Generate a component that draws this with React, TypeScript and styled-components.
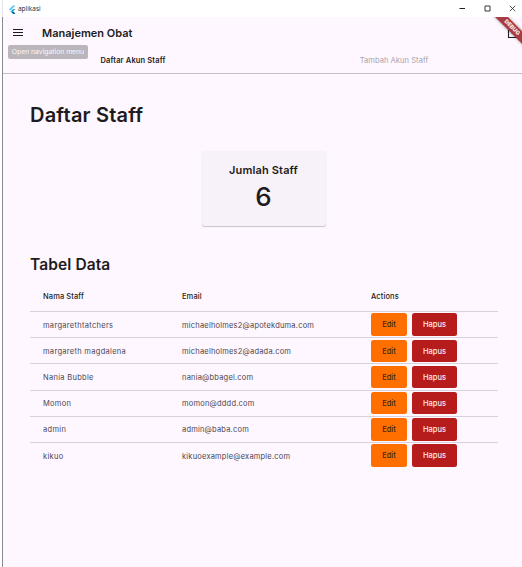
import React from "react";
import styled, { createGlobalStyle } from "styled-components";

const GlobalStyle = createGlobalStyle`
  * { box-sizing: border-box; }
  body { margin: 0; background: #fff; font-family: Inter, sans-serif; color: #1d1b20; overflow: hidden; }
`;

const Window = styled.div`
  display: flex;
  flex-direction: column;
  width: 522px;
  height: 567px;
`;

const TitleBar = styled.header`
  display: flex;
  align-items: center;
  justify-content: space-between;
  height: 17px;
  margin-left: 2px;
  padding: 0 6px 0 5px;
  border-left: 1px solid #e4e2e6;
  background: #fff;
`;

const AppName = styled.div`
  display: flex;
  align-items: center;
  gap: 2px;
  padding-top: 1px;
  font: 6.5px/10px "Open Sans", sans-serif;
  color: #222;
`;

const WindowControls = styled.div`
  display: flex;
  align-items: center;
  gap: 18px;
`;

const Client = styled.main`
  position: relative;
  flex: 1;
  margin-left: 2px;
  border-left: 1px solid #8d8a92;
  background: #fef7ff;
  overflow: hidden;
`;

const AppBar = styled.div`
  display: flex;
  align-items: center;
  justify-content: space-between;
  height: 31px;
  padding: 0 3px 0 10px;
`;

const BarLead = styled.div`
  display: flex;
  align-items: center;
  gap: 19px;
`;

const BarTitle = styled.h1`
  margin: 1px 0 0;
  font-size: 11px;
  line-height: 16px;
  font-weight: 600;
`;

const Tooltip = styled.div`
  position: absolute;
  left: 5px;
  top: 28px;
  width: 80px;
  height: 14px;
  border-radius: 2px;
  background: #bab6bb;
  color: #fbf5fc;
  font-size: 6.8px;
  line-height: 14px;
  text-align: center;
  white-space: nowrap;
`;

const Ribbon = styled.div`
  position: absolute;
  left: 479px;
  top: 6px;
  width: 60px;
  height: 9px;
  transform: rotate(45deg);
  background: #a83c40;
  box-shadow: 0 0 3px rgba(0, 0, 0, 0.45);
  color: #f7e3e6;
  font-size: 5.6px;
  line-height: 9px;
  font-weight: 900;
  text-align: center;
`;

const Tabs = styled.nav`
  display: grid;
  grid-template-columns: 260px 262px;
  height: 26px;
  border-bottom: 1px solid #c3bdc6;
`;

const Tab = styled.div<{ $active?: boolean }>`
  padding-top: 6px;
  font-size: 7.5px;
  line-height: 14px;
  text-align: center;
  letter-spacing: ${(p) => (p.$active ? "0.15px" : "0.07px")};
  font-weight: ${(p) => (p.$active ? 600 : 400)};
  color: ${(p) => (p.$active ? "#1d1b20" : "#a8a3ab")};
`;

const Content = styled.section`
  display: flex;
  flex-direction: column;
  padding: 27px 24px 0 27px;
`;

const PageTitle = styled.h2`
  margin: 0;
  font-size: 20px;
  line-height: 28px;
  font-weight: 600;
  letter-spacing: 0.2px;
`;

const StatCard = styled.div`
  align-self: center;
  width: 124px;
  height: 75px;
  margin: 22px 0 0 -1px;
  padding-top: 11px;
  border-radius: 3px;
  background: #f7f2fa;
  box-shadow: 0 1px 1px rgba(0, 0, 0, 0.22), 0 0 1px rgba(0, 0, 0, 0.06);
  text-align: center;
`;

const StatLabel = styled.div`
  font-size: 11px;
  line-height: 17px;
  font-weight: 600;
  letter-spacing: 0.15px;
`;

const StatValue = styled.div`
  font-size: 26px;
  line-height: 36px;
  font-weight: 500;
`;

const SectionTitle = styled.h3`
  margin: 29px 0 0;
  font-size: 15.5px;
  line-height: 20px;
  font-weight: 600;
  letter-spacing: 0.1px;
`;

const Table = styled.div`
  display: flex;
  flex-direction: column;
  margin-top: 6px;
`;

const Row = styled.div<{ $head?: boolean }>`
  display: grid;
  grid-template-columns: 139px 189px 1fr;
  align-items: center;
  height: ${(p) => (p.$head ? "30px" : "26.2px")};
  padding-left: 13px;
  border-top: ${(p) => (p.$head ? "0" : "1px solid #d8d1db")};
  font-size: 7.5px;
  font-weight: ${(p) => (p.$head ? 500 : 400)};
  letter-spacing: ${(p) => (p.$head ? "0.1px" : "0.2px")};
  color: ${(p) => (p.$head ? "#1d1b20" : "#49454f")};
`;

const Cell = styled.span<{ $wide?: boolean }>`
  padding-top: 1px;
  white-space: nowrap;
  letter-spacing: ${(p) => (p.$wide ? "0.3px" : "inherit")};
`;

const Actions = styled.div`
  display: flex;
  gap: 5px;
`;

const Button = styled.button<{ $danger?: boolean }>`
  width: ${(p) => (p.$danger ? "45px" : "36px")};
  height: 22.5px;
  padding: 1px 0 0;
  border: 0;
  border-radius: 2.5px;
  background: ${(p) => (p.$danger ? "#b71c1c" : "#ff6f00")};
  color: ${(p) => (p.$danger ? "#fbe9ea" : "#4a2410")};
  font: 500 7.5px/21.5px Inter, sans-serif;
`;

const staff = [
  { name: "margarethtatchers", email: "michaelholmes2@apotekduma.com" },
  { name: "margareth magdalena", email: "michaelholmes2@adada.com" },
  { name: "Nania Bubble", email: "nania@bbagel.com" },
  { name: "Momon", email: "momon@dddd.com" },
  { name: "admin", email: "admin@baba.com" },
  { name: "kikuo", email: "kikuoexample@example.com" },
];

const FlutterLogo = () => (
  <svg width="8" height="9" viewBox="0 0 8 9">
    <path d="M5 0.5H7.5L2.3 5.6L1 4.4Z" fill="#54c5f8" />
    <path d="M5 4H7.5L5 6.4L7.5 8.7H5L2.6 6.4Z" fill="#29a5dc" />
    <path d="M3.8 7.5L5 6.4L7.5 8.7H5Z" fill="#01579b" />
  </svg>
);

const MenuIcon = () => (
  <svg width="10" height="9" viewBox="0 0 10 9" stroke="#1d1b20" strokeWidth="1.15">
    <path d="M0 1.5H10M0 4.5H10M0 7.5H10" />
  </svg>
);

const LogoutIcon = () => (
  <svg width="12" height="12" viewBox="0 0 12 12" fill="none" stroke="#1d1b20" strokeWidth="1.1">
    <path d="M5 1.5H1.5V10.5H9.5V8.5M4.5 6H10.5M8.3 3.5L10.7 6L8.3 8.5" />
  </svg>
);

export default function App() {
  return (
    <Window>
      <GlobalStyle />
      <TitleBar>
        <AppName>
          <FlutterLogo />
          aplikasi
        </AppName>
        <WindowControls>
          <svg width="7" height="7" viewBox="0 0 7 7" stroke="#222"><path d="M0.5 3.5H6" /></svg>
          <svg width="7" height="7" viewBox="0 0 7 7" fill="none" stroke="#222"><path d="M1 1H6V6H1Z" strokeWidth="0.9" /></svg>
          <svg width="7" height="7" viewBox="0 0 7 7" stroke="#222"><path d="M0.8 0.8L6.2 6.2M6.2 0.8L0.8 6.2" strokeWidth="0.8" /></svg>
        </WindowControls>
      </TitleBar>
      <Client>
        <AppBar>
          <BarLead>
            <MenuIcon />
            <BarTitle>Manajemen Obat</BarTitle>
          </BarLead>
          <LogoutIcon />
        </AppBar>
        <Tabs>
          <Tab $active>Daftar Akun Staff</Tab>
          <Tab>Tambah Akun Staff</Tab>
        </Tabs>
        <Content>
          <PageTitle>Daftar Staff</PageTitle>
          <StatCard>
            <StatLabel>Jumlah Staff</StatLabel>
            <StatValue>6</StatValue>
          </StatCard>
          <SectionTitle>Tabel Data</SectionTitle>
          <Table>
            <Row $head>
              <Cell>Nama Staff</Cell>
              <Cell>Email</Cell>
              <Cell>Actions</Cell>
            </Row>
            {staff.map((s) => (
              <Row key={s.name}>
                <Cell $wide>{s.name}</Cell>
                <Cell>{s.email}</Cell>
                <Actions>
                  <Button>Edit</Button>
                  <Button $danger>Hapus</Button>
                </Actions>
              </Row>
            ))}
          </Table>
        </Content>
        <Tooltip>Open navigation menu</Tooltip>
        <Ribbon>DEBUG</Ribbon>
      </Client>
    </Window>
  );
}
